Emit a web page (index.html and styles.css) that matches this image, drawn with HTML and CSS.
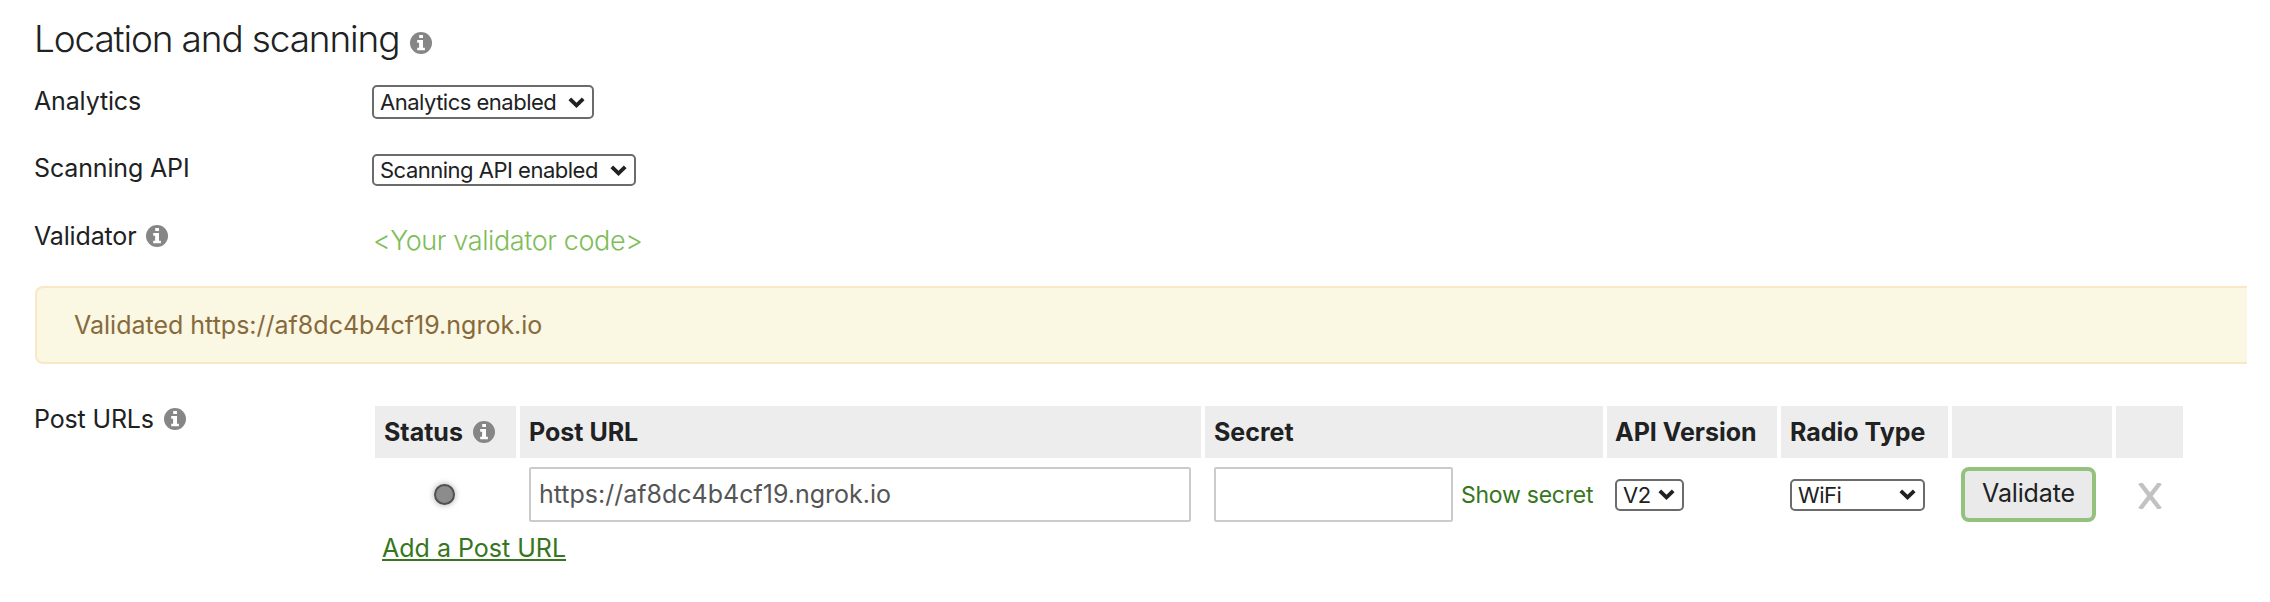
FILE: index.html
```
<!DOCTYPE html>
<html lang="en">
<head>
<meta charset="utf-8">
<title>Location and scanning</title>
<link rel="stylesheet" href="styles.css">
</head>
<body>
<svg class="defs" aria-hidden="true">
  <symbol id="info" viewBox="0 0 22 22"><circle cx="11" cy="11" r="11" fill="#868686"/><path d="M9.2 3h3.8v3.1H9.2zM7.2 8.1h5.8v7.6h1.9v2.6H7.2v-2.6h1.9v-5H7.2z" fill="#fff"/></symbol>
  <symbol id="chev" viewBox="0 0 17 11"><path d="M1.8 1.8 8.5 8.3l6.7-6.5" fill="none" stroke="#202122" stroke-width="3.8"/></symbol>
</svg>
<main class="page">
  <h1 class="title"><span>Location and scanning</span><svg class="info"><use href="#info"/></svg></h1>
  <div class="row row-analytics">
    <div class="label"><span>Analytics</span></div>
    <div class="select sel-analytics"><span>Analytics enabled</span><svg class="chev"><use href="#chev"/></svg></div>
  </div>
  <div class="row row-api">
    <div class="label"><span>Scanning API</span></div>
    <div class="select sel-api"><span>Scanning API enabled</span><svg class="chev"><use href="#chev"/></svg></div>
  </div>
  <div class="row row-validator">
    <div class="label"><span>Validator</span><svg class="info"><use href="#info"/></svg></div>
    <div class="code">&lt;Your validator code&gt;</div>
  </div>
  <div class="alert">Validated https://af8dc4b4cf19.ngrok.io</div>
  <div class="row row-urls">
    <div class="label"><span>Post URLs</span><svg class="info"><use href="#info"/></svg></div>
    <div class="urls">
      <div class="grid head">
        <div class="th"><span>Status</span><svg class="info"><use href="#info"/></svg></div>
        <div class="th"><span>Post URL</span></div>
        <div class="th"><span>Secret</span></div>
        <div class="th th-version"><span>API Version</span></div>
        <div class="th"><span>Radio Type</span></div>
        <div class="th"></div>
        <div class="th"></div>
      </div>
      <div class="grid body">
        <div class="td"><i class="dot"></i></div>
        <div class="td"><div class="input url">https://af8dc4b4cf19.ngrok.io</div></div>
        <div class="td"><div class="input secret"></div><a class="show">Show secret</a></div>
        <div class="td td-version"><div class="select sel-v"><span>V2</span><svg class="chev"><use href="#chev"/></svg></div></div>
        <div class="td"><div class="select sel-wifi"><span>WiFi</span><svg class="chev"><use href="#chev"/></svg></div></div>
        <div class="td"><div class="button">Validate</div></div>
        <div class="td remove"><svg class="x" viewBox="0 0 26 26"><path d="M3 0 23 26M23 0 3 26" fill="none" stroke="#c2c2c2" stroke-width="4.4"/></svg></div>
      </div>
      <a class="add">Add a Post URL</a>
    </div>
  </div>
</main>
</body>
</html>
```
FILE: styles.css
```
* { box-sizing: border-box; }
body { margin: 0; background: #fff; color: #202122; font-family: Inter, "Liberation Sans", sans-serif; font-size: 25px; line-height: 30px; white-space: nowrap; }
.defs { position: absolute; width: 0; height: 0; }
.page { height: 602px; padding: 15px 24px 0 34px; overflow: hidden; }
.info { width: 22px; height: 22px; flex: none; margin-left: 10px; }
.title { display: flex; align-items: center; height: 46px; margin: 0 0 24px; font-size: 37px; font-weight: 300; line-height: 46px; letter-spacing: -1.15px; }
.title span { padding-top: 1px; }
.title .info { margin: 9px 0 0 11px; }
.row { display: grid; grid-template-columns: 338px 1fr; align-items: start; }
.label { display: flex; align-items: center; height: 30px; letter-spacing: -.15px; }
.row-analytics { height: 69px; }
.row-analytics .label { margin-top: 1px; }
.row-api { height: 67px; }
.row-api .label { margin-top: -1px; }
.row-validator { height: 65px; }
.select { display: flex; align-items: center; justify-content: space-between; height: 32px; padding: 0 7px 0 6px; border: 2px solid #6b6b6b; border-radius: 5px; background: #fff; font-size: 22px; line-height: 28px; letter-spacing: -.5px; }
.chev { width: 17px; height: 11px; flex: none; }
.sel-analytics { width: 222px; height: 34px; }
.sel-api { width: 264px; }
.sel-api span { margin-top: -1px; }
.code { padding: 5px 0 0 1px; color: #7dbd57; font-size: 27px; font-weight: 300; letter-spacing: -.4px; }
.alert { width: 2212px; height: 78px; margin: 0 0 40px 1px; padding: 22px 37px; border: 2px solid #f8e8c6; border-right: 0; border-radius: 8px 0 0 8px; background: #faf7e3; color: #876a3c; }
.row-urls { grid-template-columns: 341px 1fr; }
.urls { padding-top: 2px; }
.grid { display: grid; grid-template-columns: 141px 681px 398px 170px 167px 160px 67px; column-gap: 4px; }
.th { display: flex; align-items: center; height: 52px; padding: 0 0 0 9px; background: #ededed; font-weight: 700; }
.td { display: flex; align-items: center; height: 55px; padding-left: 9px; }
.th-version, .td-version { padding-left: 8px; }
.body { margin-top: 9px; }
.dot { width: 21px; height: 21px; border: 2px solid #505050; border-radius: 50%; background: #8c8c8c; box-shadow: 0 0 6px rgba(0, 0, 0, .35); margin-left: 50px; }
.input { height: 55px; border: 2px solid #cbcbcb; border-radius: 2px; padding: 10px 8px; color: #555; }
.url { width: 662px; }
.secret { width: 239px; }
.show { margin-left: 8px; color: #36761d; font-size: 23px; letter-spacing: -.25px; }
.sel-v { width: 69px; }
.sel-wifi { width: 135px; }
.button { display: flex; justify-content: center; width: 135px; height: 55px; padding-top: 7px; border: 4px solid #95c17f; border-radius: 8px; background: #eaeaea; letter-spacing: -.15px; }
.remove { padding-left: 21px; }
.x { width: 26px; height: 26px; margin-top: 3px; }
.add { display: block; width: max-content; margin: 11px 0 0 7px; color: #36761d; text-decoration: underline; text-decoration-thickness: 2px; text-underline-offset: 2px; }
```
